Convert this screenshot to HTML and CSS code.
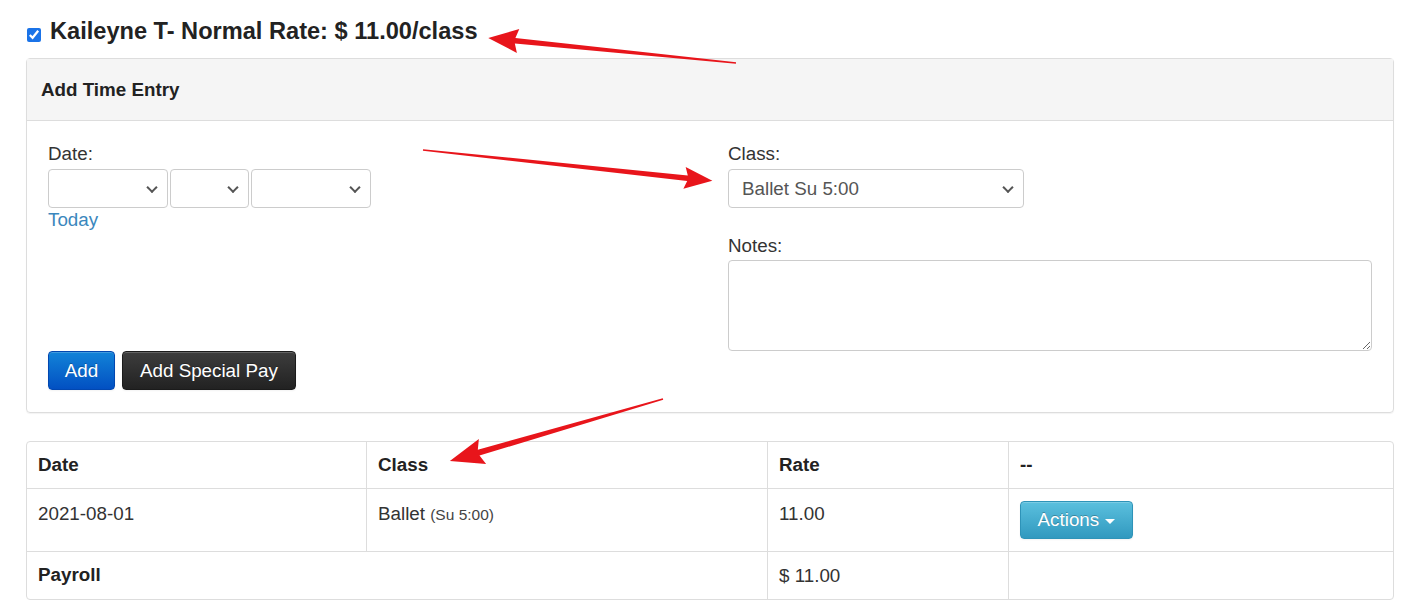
FILE: index.html
```html
<!DOCTYPE html>
<html lang="en">
<head>
    <meta charset="UTF-8">
    <title>Time Entry</title>
    <link rel="stylesheet" href="styles.css">
</head>
<body>

<div class="page">
    <h3 class="staff-title">
        <input type="checkbox" checked>
        <span>Kaileyne T- Normal Rate: $ 11.00/class</span>
    </h3>

    <!-- Add Time Entry panel -->
    <div class="panel">
        <div class="panel-heading">Add Time Entry</div>
        <div class="panel-body">
            <div class="col">
                <label>Date:</label>
                <div class="date-selects">
                    <span class="select-wrap sel-wide"><select><option></option></select></span>
                    <span class="select-wrap sel-narrow"><select><option></option></select></span>
                    <span class="select-wrap sel-wide"><select><option></option></select></span>
                </div>
                <a class="today" href="#">Today</a>
                <div class="buttons">
                    <button class="btn btn-primary">Add</button>
                    <button class="btn btn-inverse">Add Special Pay</button>
                </div>
            </div>
            <div class="col">
                <label>Class:</label>
                <span class="select-wrap class-select"><select><option>Ballet Su 5:00</option></select></span>
                <label class="notes-label">Notes:</label>
                <textarea></textarea>
            </div>
        </div>
    </div>

    <!-- Entries -->
    <table class="entries">
        <colgroup>
            <col style="width: 339px">
            <col style="width: 401px">
            <col style="width: 241px">
            <col>
        </colgroup>
        <thead>
            <tr>
                <th>Date</th>
                <th>Class</th>
                <th>Rate</th>
                <th>--</th>
            </tr>
        </thead>
        <tbody>
            <tr>
                <td>2021-08-01</td>
                <td>Ballet <small>(Su 5:00)</small></td>
                <td>11.00</td>
                <td><button class="btn btn-info">Actions <span class="caret"></span></button></td>
            </tr>
            <tr class="total">
                <th colspan="2">Payroll</th>
                <td>$ 11.00</td>
                <td></td>
            </tr>
        </tbody>
    </table>

    <!-- red annotation arrows -->
    <svg class="arrows" width="1412" height="613">
        <g fill="#e8151b">
            <polygon transform="translate(736 63) rotate(185.76)" points="0,-0.8 222,-2.8 219,-12 249,0 219,12 222,2.8 0,0.8"/>
            <polygon transform="translate(423 150) rotate(6.08)" points="0,-0.8 266,-2.8 263,-11 291,0 263,11 266,2.8 0,0.8"/>
            <polygon transform="translate(663 399) rotate(163.77)" points="0,-0.8 192,-3 188,-13 222,0 188,13 192,3 0,0.8"/>
        </g>
    </svg>
</div>

</body>
</html>
```

FILE: styles.css
```css
body {
    margin: 0;
    font-family: "Liberation Sans", Arial, sans-serif;
    font-size: 18.8px;
    color: #333;
    background: #fff;
}
.page {
    position: relative;
    padding: 16px 18px 20px 26px;
}
.staff-title {
    display: flex;
    align-items: center;
    margin: 0 0 12px 0;
    font-size: 23.6px;
    line-height: 30px;
    font-weight: bold;
    color: #222;
}
.staff-title input {
    width: 14px;
    height: 14px;
    margin: 8px 9px 0 1px;
    accent-color: #1a73e8;
}
.panel {
    border: 1px solid #ddd;
    border-radius: 4px;
    box-shadow: 0 1px 1px rgba(0, 0, 0, 0.05);
}
.panel-heading {
    background: #f5f5f5;
    border-bottom: 1px solid #ddd;
    padding: 19px 14px;
    line-height: 23px;
    font-weight: bold;
    color: #222;
}
.panel-body {
    display: grid;
    grid-template-columns: 1fr 1fr;
    column-gap: 36px;
    padding: 21px 21px 22px 21px;
}
label {
    display: block;
    line-height: 24px;
    margin-bottom: 3px;
}
.select-wrap {
    position: relative;
    display: inline-block;
}
.select-wrap::after {
    content: "";
    position: absolute;
    right: 12px;
    top: 50%;
    width: 6px;
    height: 6px;
    border-right: 2px solid #555;
    border-bottom: 2px solid #555;
    transform: translateY(-70%) rotate(45deg);
    pointer-events: none;
}
select, textarea {
    font-family: inherit;
    font-size: 18.8px;
    color: #555;
    background: #fff;
    border: 1px solid #ccc;
    border-radius: 4px;
    box-sizing: border-box;
}
select {
    appearance: none;
    width: 100%;
    height: 39px;
    padding: 0 30px 0 13px;
}
.date-selects {
    display: flex;
    gap: 2px;
    margin-top: 1px;
}
.sel-wide {
    width: 120px;
}
.sel-narrow {
    width: 79px;
}
.today {
    display: block;
    line-height: 24px;
    color: #3a87bd;
    text-decoration: none;
}
.buttons {
    display: flex;
    gap: 7px;
    margin-top: 119px;
}
.btn {
    font-family: inherit;
    font-size: 18.8px;
    height: 39px;
    padding: 0 17px;
    color: #fff;
    border-radius: 4px;
    cursor: pointer;
    text-shadow: 0 -1px 0 rgba(0, 0, 0, 0.25);
    box-shadow: inset 0 1px 0 rgba(255, 255, 255, 0.2), 0 1px 2px rgba(0, 0, 0, 0.05);
}
.btn-primary {
    width: 67px;
    padding: 0;
    background: linear-gradient(to bottom, #1283d8, #0250c2);
    border: 1px solid #0247b0;
}
.btn-inverse {
    background: linear-gradient(to bottom, #3d3d3d, #222);
    border: 1px solid #1b1b1b;
}
.btn-info {
    width: 113px;
    height: 38px;
    padding: 0;
    background: linear-gradient(to bottom, #5bc0de, #3199bf);
    border: 1px solid #2e93b8;
}
.caret {
    display: inline-block;
    width: 0;
    height: 0;
    vertical-align: middle;
    margin-left: 1px;
    border-top: 5px solid #fff;
    border-left: 5px solid transparent;
    border-right: 5px solid transparent;
}
.class-select {
    width: 296px;
    display: block;
}
.notes-label {
    margin-top: 26px;
    margin-bottom: 2px;
}
textarea {
    display: block;
    width: 100%;
    height: 91px;
    resize: both;
}
.entries {
    width: 1368px;
    margin-top: 28px;
    table-layout: fixed;
    border-collapse: separate;
    border-spacing: 0;
    border: 1px solid #ddd;
    border-radius: 4px;
}
.entries th, .entries td {
    text-align: left;
    vertical-align: top;
    padding: 12px 11px;
    line-height: 22px;
    border-left: 1px solid #ddd;
    border-top: 1px solid #ddd;
}
.entries td {
    line-height: 25px;
}
.entries .total td {
    line-height: 23px;
}
.entries th {
    color: #222;
}
.entries thead th {
    border-top: none;
}
.entries tr > :first-child {
    border-left: none;
}
.entries small {
    font-size: 15.5px;
    color: #444;
}
.arrows {
    position: absolute;
    top: 0;
    left: 0;
    pointer-events: none;
}
```
